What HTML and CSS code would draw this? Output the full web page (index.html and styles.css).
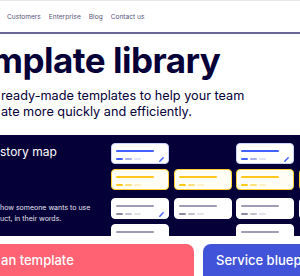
FILE: index.html
```html
<!DOCTYPE html>
<html lang="en">

<head>
    <meta charset="UTF-8">
    <meta name="viewport" content="width=device-width, initial-scale=1.0">
    <title>Template library</title>
    <link rel="stylesheet" href="styles.css">
</head>

<body>
    <header class="topbar">
        <nav class="links">
            <a href="#">Customers</a>
            <a href="#">Enterprise</a>
            <a href="#">Blog</a>
            <a href="#">Contact us</a>
        </nav>
    </header>

    <section class="hero">
        <h1>mplate library</h1>
        <p class="lead">ready-made templates to help your team<br>ate more quickly and efficiently.</p>
    </section>

    <section class="showcase">
        <article class="copy">
            <h2>story map</h2>
            <p>how someone wants to use<br>uct, in their words.</p>
        </article>

        <div class="board">
            <div class="lane">
                <div class="card activity">
                    <span class="bar"></span>
                    <div class="meta"><i></i><i></i><i></i>
                        <svg class="pen" viewBox="0 0 6 6"><path d="M1 5 L5 1" /></svg>
                    </div>
                </div>
                <span class="slot"></span>
                <div class="card activity">
                    <span class="bar"></span>
                    <div class="meta"><i></i><i></i><i></i>
                        <svg class="pen" viewBox="0 0 6 6"><path d="M1 5 L5 1" /></svg>
                    </div>
                </div>
                <span class="slot"></span>
            </div>

            <div class="lane">
                <div class="card step">
                    <span class="bar"></span>
                    <div class="meta"><i></i><i></i><i></i></div>
                </div>
                <div class="card step">
                    <span class="bar"></span>
                    <div class="meta"><i></i><i></i><i></i></div>
                </div>
                <div class="card step">
                    <span class="bar"></span>
                    <div class="meta"><i></i><i></i><i></i></div>
                </div>
                <div class="card step">
                    <span class="bar"></span>
                    <div class="meta"><i></i><i></i><i></i></div>
                </div>
            </div>

            <div class="release">
                <div class="lane">
                    <div class="card story">
                        <span class="bar"></span>
                        <div class="meta"><i></i><i></i><i></i>
                            <svg class="pen" viewBox="0 0 6 6"><path d="M1 5 L5 1" /></svg>
                        </div>
                    </div>
                    <div class="card story">
                        <span class="bar"></span>
                        <div class="meta"><i></i><i></i><i></i></div>
                    </div>
                    <div class="card story">
                        <span class="bar"></span>
                        <div class="meta"><i></i><i></i><i></i></div>
                    </div>
                    <div class="card story">
                        <span class="bar"></span>
                        <div class="meta"><i></i><i></i><i></i></div>
                    </div>
                </div>
                <div class="lane">
                    <div class="card story">
                        <span class="bar"></span>
                        <div class="meta"><i></i><i></i><i></i></div>
                    </div>
                    <span class="slot"></span>
                    <div class="card story">
                        <span class="bar"></span>
                        <div class="meta"><i></i><i></i><i></i></div>
                    </div>
                    <span class="slot"></span>
                </div>
            </div>
        </div>
    </section>

    <section class="tiles">
        <a class="tile coral" href="#">an template</a>
        <a class="tile blue" href="#">Service blueprint</a>
    </section>
</body>

</html>
```

FILE: styles.css
```css
* {
    box-sizing: border-box;
    margin: 0;
    padding: 0;
}

body {
    width: 300px;
    height: 276px;
    overflow: hidden;
    background-color: #fff;
    color: #050038;
    font-family: Inter, "Noto Sans", sans-serif;
}

/* top navigation */
.topbar {
    height: 34px;
    display: flex;
    align-items: center;
    padding-left: 7px;
    border-top: 1px solid #e6e6ea;
    border-bottom: 2px solid #6c6799;
}

.links {
    display: flex;
    gap: 8px;
}

.links a {
    font-size: 6.6px;
    color: #57557a;
    text-decoration: none;
}

/* hero */
.hero {
    padding-top: 9px;
}

.hero h1 {
    margin-left: -9px;
    font-size: 35px;
    line-height: 34px;
    font-weight: 700;
    letter-spacing: -0.5px;
    white-space: nowrap;
}

.lead {
    margin-top: 11px;
    margin-left: 1px;
    font-size: 12.7px;
    line-height: 16px;
    white-space: nowrap;
}

/* dark story map panel */
.showcase {
    height: 101px;
    margin-top: 15px;
    padding-top: 8px;
    display: flex;
    overflow: hidden;
    background-color: #050038;
}

.copy {
    flex: 0 0 111px;
    color: #fff;
}

.copy h2 {
    margin-top: 1px;
    font-size: 12px;
    line-height: 16px;
    font-weight: 400;
    white-space: nowrap;
}

.copy p {
    margin-top: 43px;
    font-size: 7px;
    line-height: 10.5px;
    color: #e4e3ef;
    white-space: nowrap;
}

.board {
    flex-shrink: 0;
    display: flex;
    flex-direction: column;
    gap: 5px;
}

.release {
    margin-top: 3px;
    display: flex;
    flex-direction: column;
    gap: 5px;
}

.lane {
    display: grid;
    grid-template-columns: repeat(4, 58px);
    column-gap: 4.5px;
}

.card {
    height: 21px;
    padding: 6px 4px 0;
    border-radius: 4px;
    border: 1px solid #fff;
    background-color: #fff;
}

.bar {
    display: block;
    width: 38px;
    height: 2px;
    border-radius: 1px;
}

.meta {
    margin-top: 5px;
    height: 4px;
    display: flex;
    align-items: center;
    gap: 2px;
}

.meta i {
    width: 7px;
    height: 2px;
    border-radius: 1px;
}

.pen {
    width: 5px;
    height: 5px;
    margin-left: auto;
    fill: none;
    stroke: #4262ff;
    stroke-width: 1.8;
    stroke-linecap: round;
}

.activity {
    border-color: #cdd2f8;
}

.activity .bar,
.activity .meta i:nth-child(1) {
    background-color: #4262ff;
}

.activity .meta i:nth-child(2) {
    background-color: #a8b1ee;
}

.activity .meta i:nth-child(3) {
    background-color: #dfe2f8;
}

.step {
    border-color: #ffd02f;
    background-color: #fffdf4;
}

.step .bar,
.step .meta i:nth-child(1) {
    background-color: #ffc91c;
}

.step .meta i:nth-child(2) {
    background-color: #ffe07a;
}

.step .meta i:nth-child(3) {
    background-color: #fff1c4;
}

.story .bar {
    background-color: #9e9cb2;
}

.story .meta i:nth-child(1) {
    background-color: #8c8aa2;
}

.story .meta i:nth-child(2) {
    background-color: #c3c2d0;
}

.story .meta i:nth-child(3) {
    background-color: #e4e3ea;
}

/* template tiles */
.tiles {
    margin-top: 8px;
    display: flex;
    gap: 9px;
}

.tile {
    flex-shrink: 0;
    height: 48px;
    padding-top: 8px;
    border-radius: 8px;
    font-size: 13px;
    line-height: 16px;
    font-weight: 500;
    color: #fff;
    text-decoration: none;
    white-space: nowrap;
}

.coral {
    width: 206px;
    margin-left: -12px;
    padding-left: 13px;
    background-color: #ff6272;
}

.blue {
    width: 140px;
    padding-left: 13px;
    background-color: #4153d8;
}
```
